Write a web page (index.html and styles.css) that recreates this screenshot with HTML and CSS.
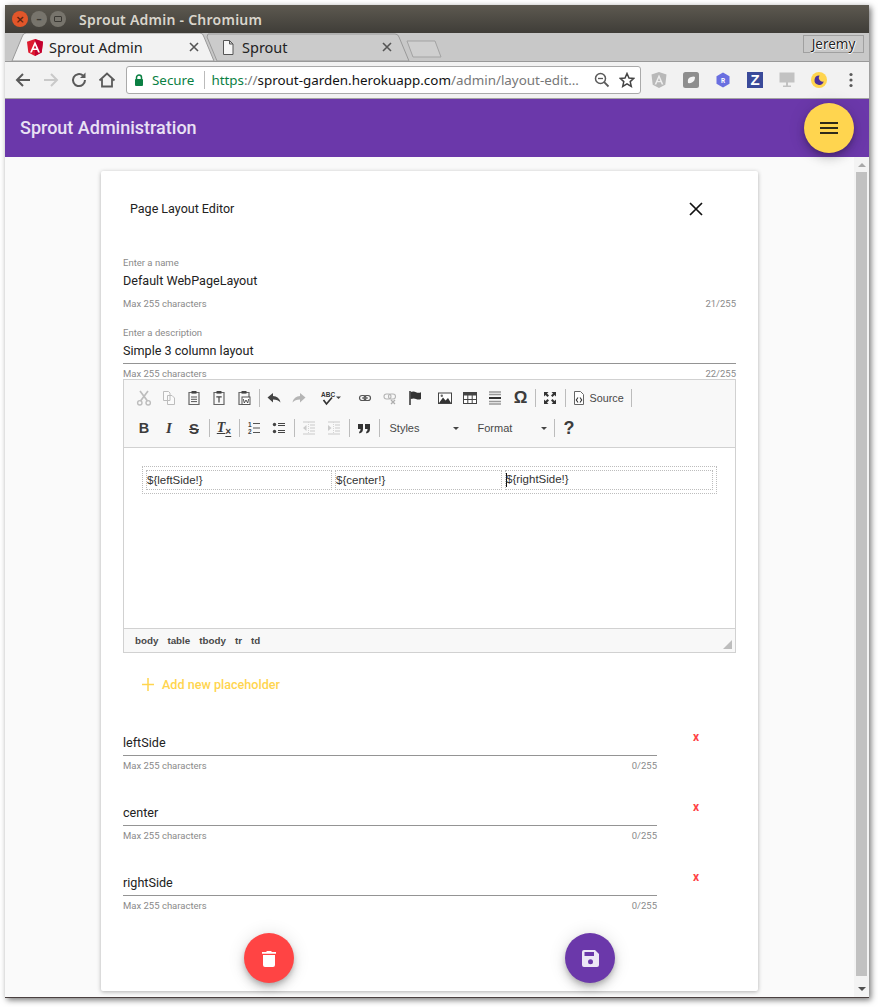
FILE: index.html
```html
<!DOCTYPE html>
<html>
<head>
  <title>Sprout Admin</title>
  <link rel="stylesheet" href="styles.css">
</head>
<body>
  <div class="window">

    <!-- Title bar -->
    <div class="titlebar">
      <span class="winbtn winbtn-close">×</span>
      <span class="winbtn">–</span>
      <span class="winbtn winbtn-max"><i></i></span>
      <span class="wintitle">Sprout Admin - Chromium</span>
    </div>

    <!-- Tabs -->
    <div class="tabstrip">
      <svg class="tabshapes" width="864" height="29" viewBox="0 0 864 29">
        <path d="M203 1 H390 Q393 1 394 4 L404 28 H212 L202 4 Z" fill="#cbcbcb" stroke="#999"/>
        <path d="M402 8 H430 L436 24 H408 Z" fill="#cfcfcf" stroke="#a3a3a3"/>
        <path d="M7 28 L17 4 Q18 0 21 0 H195 Q198 0 199 4 L209 28 Z" fill="#f2f2f2" stroke="#999"/>
      </svg>
      <div class="tab tab-active">
        <svg class="favicon" width="16" height="17" viewBox="0 0 16 17">
          <path d="M8 0 L16 2.8 L14.7 13.4 L8 17 L1.3 13.4 L0 2.8 Z" fill="#dd1b30"/>
          <path d="M8 0 L16 2.8 L14.7 13.4 L8 17 Z" fill="#c3002f"/>
          <path d="M8 2.2 L3 13.4 H4.9 L5.9 10.9 H10.1 L11.1 13.4 H13 Z M8 6.2 L9.4 9.4 H6.6 Z" fill="#fff"/>
        </svg>
        <span class="tab-title">Sprout Admin</span>
        <svg class="tab-x" width="10" height="10" viewBox="0 0 10 10"><path d="M1 1 L9 9 M9 1 L1 9" stroke="#555" stroke-width="1.6"/></svg>
      </div>
      <div class="tab tab-other">
        <svg class="favicon" width="12" height="15" viewBox="0 0 12 15">
          <path d="M1.5 .5 H7.5 L11 4 V14.5 H1.5 Z M7.5 .5 V4 H11" fill="#f5f5f5" stroke="#555"/>
        </svg>
        <span class="tab-title">Sprout</span>
        <svg class="tab-x" width="10" height="10" viewBox="0 0 10 10"><path d="M1 1 L9 9 M9 1 L1 9" stroke="#555" stroke-width="1.6"/></svg>
      </div>
      <span class="profile">Jeremy</span>
    </div>

    <!-- Browser toolbar -->
    <div class="browserbar">
      <svg class="navicon" width="18" height="18" viewBox="0 0 18 18"><path d="M16 9 H3 M9 3 L3 9 L9 15" fill="none" stroke="#5a5a5a" stroke-width="2"/></svg>
      <svg class="navicon" width="18" height="18" viewBox="0 0 18 18"><path d="M2 9 H15 M9 3 L15 9 L9 15" fill="none" stroke="#c9c9c9" stroke-width="2"/></svg>
      <svg class="navicon" width="18" height="18" viewBox="0 0 18 18"><path d="M15 9 A6 6 0 1 1 13 4.6" fill="none" stroke="#5a5a5a" stroke-width="2"/><path d="M15.5 1.5 V7 H10 Z" fill="#5a5a5a"/></svg>
      <svg class="navicon" width="18" height="18" viewBox="0 0 18 18"><path d="M1.5 9.5 L9 2.5 L16.5 9.5 M4 8 V15.5 H14 V8" fill="none" stroke="#5a5a5a" stroke-width="1.8"/></svg>
      <div class="omnibox">
        <svg width="10" height="13" viewBox="0 0 10 13"><path d="M2.5 6 V3.5 A2.5 2.5 0 0 1 7.5 3.5 V6" fill="none" stroke="#0b8043" stroke-width="1.5"/><rect x="1" y="5" width="8" height="7" rx="1" fill="#0b8043"/></svg>
        <span class="secure">Secure</span>
        <span class="omni-sep"></span>
        <span class="url"><span class="url-scheme">https</span><span class="url-path">://</span>sprout-garden.herokuapp.com<span class="url-path">/admin/layout-edit…</span></span>
        <svg class="omni-zoom" width="16" height="16" viewBox="0 0 16 16"><circle cx="6.5" cy="6.5" r="5" fill="none" stroke="#5a5a5a" stroke-width="1.5"/><path d="M10.2 10.2 L14.5 14.5" stroke="#5a5a5a" stroke-width="1.8"/><path d="M4 6.5 H9" stroke="#5a5a5a" stroke-width="1.3"/></svg>
        <svg class="omni-star" width="16" height="16" viewBox="0 0 16 16"><path d="M8 1.5 L10 6 L14.8 6.4 L11.2 9.6 L12.3 14.4 L8 11.9 L3.7 14.4 L4.8 9.6 L1.2 6.4 L6 6 Z" fill="none" stroke="#444" stroke-width="1.5"/></svg>
      </div>
      <div class="extensions">
        <svg width="16" height="16" viewBox="0 0 16 16"><path d="M8 0 L15.5 2.6 L14.3 12.8 L8 16 L1.7 12.8 L.5 2.6 Z" fill="#b9b9b9"/><path d="M8 2.5 L3.6 12.5 H5.3 L6.2 10.2 H9.8 L10.7 12.5 H12.4 Z M8 6 L9.2 8.9 H6.8 Z" fill="#eee"/></svg>
        <svg width="16" height="16" viewBox="0 0 16 16"><rect width="16" height="16" rx="2.5" fill="#8e8e8e"/><path d="M5 11 Q4 6 8 5 Q11 4 12 5 Q12 9 9 10.5 Q7 11.5 5 11 Z" fill="#f4f4f4"/></svg>
        <svg width="16" height="16" viewBox="0 0 16 16"><path d="M8 .5 L14.5 4.2 V11.8 L8 15.5 L1.5 11.8 V4.2 Z" fill="#6a6fe0"/><text x="8" y="10.6" class="ext-r">R</text></svg>
        <span class="ext-z">Z</span>
        <svg width="16" height="16" viewBox="0 0 16 16"><path d="M.5 .5 H15.5 V10.5 H.5 Z M7 10.5 H9 V13.5 H12 V15 H4 V13.5 H7 Z" fill="#c2c2c2"/></svg>
        <svg width="16" height="16" viewBox="0 0 16 16"><circle cx="8" cy="8" r="8" fill="#ffd54f"/><path d="M8.5 3.5 A4.7 4.7 0 1 0 12.7 9.6 A4 4 0 0 1 8.5 3.5 Z" fill="#4a2f9c"/></svg>
        <svg width="16" height="16" viewBox="0 0 16 16"><circle cx="8" cy="2.5" r="1.6" fill="#5a5a5a"/><circle cx="8" cy="8" r="1.6" fill="#5a5a5a"/><circle cx="8" cy="13.5" r="1.6" fill="#5a5a5a"/></svg>
      </div>
    </div>

    <!-- App header -->
    <header class="appbar">
      <span class="appbar-title">Sprout Administration</span>
      <button class="fab fab-menu">
        <svg width="18" height="12" viewBox="0 0 18 12"><path d="M0 1 H18 M0 6 H18 M0 11 H18" stroke="#2f2a1a" stroke-width="2"/></svg>
      </button>
    </header>

    <div class="viewport">
      <main class="page">
        <section class="card">

          <div class="card-head">
            <span class="card-title">Page Layout Editor</span>
            <svg class="card-close" width="14" height="14" viewBox="0 0 14 14"><path d="M1 1 L13 13 M13 1 L1 13" stroke="#111" stroke-width="1.7"/></svg>
          </div>

          <div class="field field-bare">
            <div class="field-label">Enter a name</div>
            <div class="field-value">Default WebPageLayout</div>
            <div class="field-hint"><span>Max 255 characters</span><span>21/255</span></div>
          </div>

          <div class="field field-last">
            <div class="field-label">Enter a description</div>
            <div class="field-value">Simple 3 column layout</div>
            <div class="field-hint"><span>Max 255 characters</span><span>22/255</span></div>
          </div>

          <!-- Rich text editor -->
          <div class="editor">
            <div class="editor-tools">
              <div class="tool-row">
                <span class="tool off"><svg width="16" height="16" viewBox="0 0 16 16"><path d="M4 1 L11.5 11 M12 1 L4.5 11" stroke="#777" stroke-width="1.7"/><circle cx="3.8" cy="12.8" r="2.2" fill="none" stroke="#777" stroke-width="1.4"/><circle cx="12.2" cy="12.8" r="2.2" fill="none" stroke="#777" stroke-width="1.4"/></svg></span>
                <span class="tool off"><svg width="16" height="16" viewBox="0 0 16 16"><path d="M2.5 1.5 H7.5 L9 3 V10.5 H2.5 Z M6.5 5.5 H11 L13.5 8 V14.5 H6.5 Z" fill="#fff" stroke="#777"/></svg></span>
                <span class="tool"><svg width="16" height="16" viewBox="0 0 16 16"><path d="M3 2.5 H13 V14.5 H3 Z" fill="none" stroke="#666" stroke-width="1.2"/><rect x="5.5" y="1" width="5" height="2.6" fill="#444"/><path d="M5 7 H11 M5 9.3 H11 M5 11.6 H11" stroke="#555"/></svg></span>
                <span class="tool"><svg width="16" height="16" viewBox="0 0 16 16"><path d="M3 2.5 H13 V14.5 H3 Z" fill="none" stroke="#666" stroke-width="1.2"/><rect x="5.5" y="1" width="5" height="2.6" fill="#444"/><path d="M5.3 6.8 H10.7 M8 6.8 V12.5" stroke="#444" stroke-width="1.2"/></svg></span>
                <span class="tool"><svg width="16" height="16" viewBox="0 0 16 16"><path d="M3 2.5 H13 V14.5 H3 Z" fill="none" stroke="#666" stroke-width="1.2"/><rect x="5.5" y="1" width="5" height="2.6" fill="#444"/><rect x="6" y="7" width="8" height="7.5" fill="#fff" stroke="#555"/><path d="M7.3 9 L8.3 13 L10 10 L11.7 13 L12.7 9" fill="none" stroke="#444" stroke-width=".9"/></svg></span>
                <span class="tool-sep"></span>
                <span class="tool"><svg width="16" height="16" viewBox="0 0 16 16"><path d="M1.5 7.5 L7 3 V6 Q13 6 14.5 12.5 Q12 9.5 7 9.5 V12.5 Z" fill="#444"/></svg></span>
                <span class="tool off"><svg width="16" height="16" viewBox="0 0 16 16"><path d="M14.5 7.5 L9 3 V6 Q3 6 1.5 12.5 Q4 9.5 9 9.5 V12.5 Z" fill="#666"/></svg></span>
                <span class="tool tool-spell"><svg width="24" height="16" viewBox="0 0 24 16"><text x="1" y="7" class="spell-text">ABC</text><path d="M3.5 10 L6.5 14 L12 7.5" fill="none" stroke="#333" stroke-width="1.7"/><path d="M16 6.5 H21 L18.5 9 Z" fill="#444"/></svg></span>
                <span class="tool"><svg width="16" height="16" viewBox="0 0 16 16"><rect x="2.5" y="5.5" width="6.5" height="5" rx="2.5" fill="none" stroke="#555" stroke-width="1.2"/><rect x="7" y="5.5" width="6.5" height="5" rx="2.5" fill="none" stroke="#555" stroke-width="1.2"/><path d="M5 8 H11" stroke="#555"/></svg></span>
                <span class="tool off"><svg width="16" height="16" viewBox="0 0 16 16"><rect x="2" y="4" width="7" height="5" rx="2.5" fill="none" stroke="#666" stroke-width="1.1"/><rect x="6.5" y="4" width="7" height="5" rx="2.5" fill="none" stroke="#666" stroke-width="1.1"/><path d="M9 10 L13 14 M13 10 L9 14" stroke="#555" stroke-width="1.3"/></svg></span>
                <span class="tool"><svg width="16" height="16" viewBox="0 0 16 16"><path d="M3 1 V15" stroke="#333" stroke-width="1.5"/><path d="M3.5 2 Q7 1 9 2.2 Q11.5 3.4 14 2.2 V9 Q11.5 10.2 9 9 Q7 8 3.5 9 Z" fill="#333"/></svg></span>
                <span class="tool-gap"></span>
                <span class="tool"><svg width="16" height="16" viewBox="0 0 16 16"><rect x="1.5" y="3" width="13" height="10.5" fill="#fff" stroke="#444"/><path d="M2 13 L6 7.5 L8.5 10.5 L11 8 L14 13 Z" fill="#333"/><circle cx="4.8" cy="5.8" r="1.2" fill="#666"/></svg></span>
                <span class="tool"><svg width="16" height="16" viewBox="0 0 16 16"><rect x="1.5" y="2.5" width="13" height="11" fill="#fff" stroke="#444"/><rect x="1.5" y="2.5" width="13" height="3" fill="#444"/><path d="M1.5 9.5 H14.5 M5.8 5 V13.5 M10.2 5 V13.5" stroke="#444"/></svg></span>
                <span class="tool"><svg width="16" height="16" viewBox="0 0 16 16"><path d="M2 2 H14 M2 4.5 H14 M2 11.5 H14 M2 14 H14" stroke="#999" stroke-width="1.5"/><path d="M2 8 H14" stroke="#333" stroke-width="2"/></svg></span>
                <span class="tool tool-glyph tool-omega">Ω</span>
                <span class="tool-sep"></span>
                <span class="tool"><svg width="16" height="16" viewBox="0 0 16 16"><path d="M2 2 H6.5 L5 3.5 L7 5.5 L5.5 7 L3.5 5 L2 6.5 Z M14 2 V6.5 L12.5 5 L10.5 7 L9 5.5 L11 3.5 L9.5 2 Z M2 14 V9.5 L3.5 11 L5.5 9 L7 10.5 L5 12.5 L6.5 14 Z M14 14 H9.5 L11 12.5 L9 10.5 L10.5 9 L12.5 11 L14 9.5 Z" fill="#333"/></svg></span>
                <span class="tool-sep"></span>
                <span class="tool tool-source"><svg width="12" height="14" viewBox="0 0 12 14"><path d="M1.5 .5 H7.5 L10.5 3.5 V13.5 H1.5 Z" fill="#fff" stroke="#666"/><path d="M5 6.5 L3.3 9 L5 11.5 M7 6.5 L8.7 9 L7 11.5" fill="none" stroke="#333" stroke-width="1.1"/></svg>Source</span>
                <span class="tool-sep"></span>
              </div>
              <div class="tool-row">
                <span class="tool tool-glyph tool-bold">B</span>
                <span class="tool tool-glyph tool-italic">I</span>
                <span class="tool tool-glyph tool-strike">S</span>
                <span class="tool-sep"></span>
                <span class="tool tool-glyph tool-clear">T<small>×</small></span>
                <span class="tool-sep"></span>
                <span class="tool"><svg width="16" height="16" viewBox="0 0 16 16"><path d="M7 3.5 H14 M7 8 H14 M7 12.5 H14" stroke="#555" stroke-width="1.2"/><text x="2" y="6.5" class="list-num">1</text><text x="2" y="14" class="list-num">2</text></svg></span>
                <span class="tool"><svg width="16" height="16" viewBox="0 0 16 16"><circle cx="3.5" cy="4.5" r="1.7" fill="#444"/><circle cx="3.5" cy="11.5" r="1.7" fill="#444"/><path d="M7 3.5 H14 M7 5.5 H14 M7 10.5 H14 M7 12.5 H14" stroke="#444"/></svg></span>
                <span class="tool-sep"></span>
                <span class="tool off faint"><svg width="16" height="16" viewBox="0 0 16 16"><path d="M2 2 H14 M9 5 H14 M9 8 H14 M9 11 H14 M2 14 H14" stroke="#666"/><path d="M7.5 2 V14 " stroke="#888" stroke-dasharray="1 1"/><path d="M5.5 5 L2 8 L5.5 11 Z" fill="#666"/></svg></span>
                <span class="tool off faint"><svg width="16" height="16" viewBox="0 0 16 16"><path d="M2 2 H14 M9 5 H14 M9 8 H14 M9 11 H14 M2 14 H14" stroke="#666"/><path d="M7.5 2 V14 " stroke="#888" stroke-dasharray="1 1"/><path d="M2 5 L5.5 8 L2 11 Z" fill="#666"/></svg></span>
                <span class="tool-sep"></span>
                <span class="tool"><svg width="16" height="16" viewBox="0 0 16 16"><path d="M2 4 H7 V9 Q7 12.5 3.5 13.5 L3 12 Q4.5 11.3 4.6 9 H2 Z M9 4 H14 V9 Q14 12.5 10.5 13.5 L10 12 Q11.5 11.3 11.6 9 H9 Z" fill="#333"/></svg></span>
                <span class="tool-sep"></span>
                <span class="combo combo-styles">Styles<i class="caret"></i></span>
                <span class="combo combo-format">Format<i class="caret"></i></span>
                <span class="tool-sep"></span>
                <span class="tool tool-glyph tool-help">?</span>
              </div>
            </div>

            <div class="editor-body">
              <table class="layout-table">
                <tr>
                  <td class="col-left">${leftSide!}</td>
                  <td class="col-center">${center!}</td>
                  <td class="col-right"><span class="caret-mark"></span>${rightSide!}</td>
                </tr>
              </table>
            </div>

            <div class="editor-path">
              <span>body</span><span>table</span><span>tbody</span><span>tr</span><span>td</span>
              <svg class="resizer" width="9" height="9" viewBox="0 0 9 9"><path d="M9 0 V9 H0 Z" fill="#bdbdbd"/></svg>
            </div>
          </div>

          <button class="add-btn">
            <svg width="12" height="13" viewBox="0 0 12 13"><path d="M6 0 V13 M0 6.5 H12" stroke="#ffd54f" stroke-width="1.5"/></svg>
            Add new placeholder
          </button>

          <div class="ph-row">
            <div class="field ph-field">
              <div class="field-value">leftSide</div>
              <div class="field-hint"><span>Max 255 characters</span><span>0/255</span></div>
            </div>
            <span class="ph-remove">x</span>
          </div>
          <div class="ph-row">
            <div class="field ph-field">
              <div class="field-value">center</div>
              <div class="field-hint"><span>Max 255 characters</span><span>0/255</span></div>
            </div>
            <span class="ph-remove">x</span>
          </div>
          <div class="ph-row">
            <div class="field ph-field">
              <div class="field-value">rightSide</div>
              <div class="field-hint"><span>Max 255 characters</span><span>0/255</span></div>
            </div>
            <span class="ph-remove">x</span>
          </div>

          <div class="card-actions">
            <button class="fab fab-delete">
              <svg width="14" height="17" viewBox="0 0 14 17"><path d="M1 5 H13 V15 Q13 17 11 17 H3 Q1 17 1 15 Z M0 2 H4 L5 1 H9 L10 2 H14 V3.7 H0 Z" fill="#fff"/></svg>
            </button>
            <button class="fab fab-save">
              <svg width="17" height="17" viewBox="0 0 17 17"><path d="M2 0 H13 L17 4 V15 Q17 17 15 17 H2 Q0 17 0 15 V2 Q0 0 2 0 Z M2.5 2 V6 H12 V2 Z" fill="#ede7f6" fill-rule="evenodd"/><circle cx="8.5" cy="11.8" r="2.5" fill="#6b38aa"/></svg>
            </button>
          </div>
        </section>
      </main>

      <div class="scrollbar">
        <i class="scroll-up"></i>
        <div class="scroll-thumb"></div>
        <i class="scroll-down"></i>
      </div>
    </div>
  </div>
</body>
</html>
```

FILE: styles.css
```css
html, body {
  margin: 0;
  height: 100%;
  background: #fff;
  overflow: hidden;
}

body {
  padding: 5px 0 0 5px;
  box-sizing: border-box;
  font-family: Roboto, sans-serif;
}

button {
  font-family: inherit;
  border: none;
  padding: 0;
  background: none;
}

.window {
  width: 864px;
  height: 993px;
  display: flex;
  flex-direction: column;
  border-bottom: 1px solid #4a4040;
  box-sizing: border-box;
  box-shadow: 2px 2px 6px rgba(0, 0, 0, .55);
}

/* Title bar */
.titlebar {
  height: 28px;
  flex: none;
  display: flex;
  align-items: center;
  padding-left: 7px;
  gap: 3px;
  background: linear-gradient(#5d5950, #3f3d38);
}

.winbtn {
  width: 16px;
  height: 16px;
  border-radius: 50%;
  display: flex;
  align-items: center;
  justify-content: center;
  background: #77746c;
  color: #3a3833;
  font: bold 11px "DejaVu Sans", sans-serif;
}

.winbtn-close {
  background: #e2562a;
  color: #5c2410;
}

.winbtn-max i {
  width: 6px;
  height: 4px;
  border: 1px solid #3a3833;
  border-radius: 1px;
}

.wintitle {
  margin-left: 10px;
  color: #d9d5cc;
  font: 600 14px "Noto Sans", sans-serif;
  letter-spacing: .25px;
}

/* Tabs */
.tabstrip {
  height: 29px;
  flex: none;
  display: flex;
  position: relative;
  background: #c8c8c8;
  box-sizing: border-box;
  border-bottom: 1px solid #999;
}

.tabshapes {
  position: absolute;
  left: 0;
  top: 0;
}

.tab {
  position: relative;
  display: flex;
  align-items: center;
  font: 14.5px "Noto Sans", sans-serif;
  color: #222;
  height: 28px;
}

.tab-active {
  width: 172px;
  margin-left: 22px;
}

.tab-other {
  width: 170px;
  margin-left: 23px;
}

.favicon {
  flex: none;
}

.tab-active .tab-title {
  margin-left: 6px;
}

.tab-other .tab-title {
  margin-left: 8px;
}

.tab-x {
  margin-left: auto;
}

.profile {
  position: absolute;
  right: 5px;
  top: 2px;
  width: 61px;
  height: 18px;
  box-sizing: border-box;
  border: 1px solid #a0a0a0;
  text-align: center;
  font: 13.5px/16px "Noto Sans", sans-serif;
  color: #222;
  text-shadow: 0 0 1px #fff, 1px 0 0 #fff, 0 1px 0 #fff;
}

/* Browser toolbar */
.browserbar {
  height: 37px;
  flex: none;
  display: flex;
  align-items: center;
  padding-left: 9px;
  box-sizing: border-box;
  background: #f2f2f2;
  border-bottom: 1px solid #a3a3a3;
}

.navicon {
  flex: none;
  margin-right: 10px;
}

.omnibox {
  width: 515px;
  height: 28px;
  flex: none;
  display: flex;
  align-items: center;
  padding: 0 5px 0 7px;
  box-sizing: border-box;
  background: #fff;
  border: 1px solid #aaa;
  border-radius: 3px;
  font: 13.4px "Noto Sans", sans-serif;
  white-space: nowrap;
}

.secure {
  margin-left: 8px;
  color: #0b8043;
}

.omni-sep {
  width: 1px;
  height: 18px;
  margin: 0 6px 0 10px;
  background: #bbb;
}

.url {
  color: #111;
}

.url-scheme {
  color: #0b8043;
}

.url-path {
  color: #777;
}

.omni-zoom {
  margin-left: auto;
}

.omni-star {
  margin-left: 9px;
}

.extensions {
  display: flex;
  align-items: center;
  gap: 16px;
  margin-left: 10px;
}

.ext-r {
  font: bold 6.5px Roboto, sans-serif;
  fill: #fff;
  text-anchor: middle;
}

.ext-z {
  width: 16px;
  height: 16px;
  background: #3a4a9a;
  color: #fff;
  font: bold 15px/16px "Liberation Sans", sans-serif;
  text-align: center;
}

/* App header */
.appbar {
  height: 58px;
  flex: none;
  position: relative;
  display: flex;
  align-items: center;
  padding: 0 0 2px 15px;
  box-sizing: border-box;
  background: #6b38aa;
}

.appbar-title {
  color: #e9e1f4;
  font-size: 18px;
  font-weight: 500;
}

.fab {
  width: 50px;
  height: 50px;
  border-radius: 50%;
  display: flex;
  align-items: center;
  justify-content: center;
  box-shadow: 0 3px 5px -1px rgba(0, 0, 0, .2), 0 6px 10px 0 rgba(0, 0, 0, .14), 0 1px 18px 0 rgba(0, 0, 0, .12);
}

.fab-menu {
  position: absolute;
  right: 15px;
  top: 4px;
  background: #ffd54f;
}

.fab-delete {
  background: #ff4444;
}

.fab-save {
  background: #6b38aa;
}

/* Page */
.viewport {
  flex: 1;
  display: flex;
  min-height: 0;
  background: #fafafa;
}

.page {
  flex: 1;
  padding: 14px 0 0 96px;
}

.card {
  width: 657px;
  height: 820px;
  padding: 0 22px;
  box-sizing: border-box;
  background: #fff;
  border-radius: 2px;
  box-shadow: 0 1px 4px rgba(0, 0, 0, .3);
}

.card-head {
  display: flex;
  align-items: center;
  justify-content: space-between;
  height: 24px;
  padding: 26px 33px 36px 7px;
}

.card-title {
  font-size: 12.5px;
  line-height: 22px;
  color: #222;
}

/* Form fields */
.field {
  margin-bottom: 17px;
}

.field-last {
  margin-bottom: -1px;
}

.field-label {
  height: 12px;
  margin-bottom: 3px;
  font-size: 9.5px;
  line-height: 12px;
  color: #8a8a8a;
}

.field-value {
  height: 18px;
  padding-bottom: 3px;
  border-bottom: 1px solid #949494;
  font-size: 12.6px;
  line-height: 18px;
  color: #222;
}

.field-bare .field-value {
  border-bottom-color: transparent;
}

.field-hint {
  display: flex;
  justify-content: space-between;
  margin-top: 4px;
  font-size: 9.5px;
  line-height: 12px;
  color: #8a8a8a;
}

/* Editor */
.editor {
  height: 274px;
  box-sizing: border-box;
  border: 1px solid #d1d1d1;
  display: flex;
  flex-direction: column;
  font-family: "Liberation Sans", sans-serif;
}

.editor-tools {
  height: 68px;
  flex: none;
  box-sizing: border-box;
  padding: 6px 0 0 7.5px;
  background: #f8f8f8;
  border-bottom: 1px solid #d1d1d1;
}

.tool-row {
  display: flex;
  align-items: center;
  height: 24px;
  margin-bottom: 6px;
}

.tool {
  width: 25px;
  height: 24px;
  flex: none;
  display: flex;
  align-items: center;
  justify-content: center;
  color: #444;
}

.off {
  opacity: .45;
}

.faint {
  opacity: .3;
}

.tool-sep {
  width: 1px;
  height: 18px;
  flex: none;
  margin: 0 2px;
  background: #bcbcbc;
}

.tool-gap {
  width: 5px;
  flex: none;
}

.tool-spell {
  width: 41px;
  justify-content: flex-start;
  padding-left: 8px;
  box-sizing: border-box;
}

.spell-text {
  font: bold 6.5px "Liberation Sans", sans-serif;
  fill: #333;
}

.list-num {
  font: bold 6.5px "Liberation Sans", sans-serif;
  fill: #444;
}

.tool-source {
  width: auto;
  padding: 0 5px 0 5px;
  gap: 5px;
  font-size: 10.8px;
  color: #484848;
}

.tool-glyph {
  font-size: 15px;
  font-weight: bold;
  color: #3c3c3c;
}

.tool-omega {
  font-size: 17px;
  padding-left: 1px;
  box-sizing: border-box;
}

.tool-bold {
  font-size: 14.5px;
}

.tool-italic {
  font: italic bold 15px "Liberation Serif", serif;
}

.tool-strike {
  text-decoration: line-through;
}

.tool-clear {
  font: italic bold 14px "Liberation Serif", serif;
  text-decoration: underline;
}

.tool-clear small {
  font: bold 10px "Liberation Sans", sans-serif;
  margin-top: 6px;
}

.tool-help {
  font-size: 18px;
}

.combo {
  display: flex;
  align-items: center;
  justify-content: space-between;
  flex: none;
  box-sizing: border-box;
  height: 24px;
  font-size: 11px;
  color: #484848;
}

.combo-styles {
  width: 87px;
  padding: 0 10px 0 8px;
}

.combo-format {
  width: 83px;
  padding: 0 5px 0 9px;
}

.caret {
  width: 0;
  height: 0;
  border: 3px solid transparent;
  border-top-color: #444;
  border-bottom: none;
}

.editor-body {
  flex: 1;
  padding: 18px;
  background: #fff;
}

.layout-table {
  table-layout: fixed;
  width: 575px;
  border-spacing: 3px;
  border: 1px dotted #bdbdbd;
  font-size: 11.5px;
  color: #333;
}

.layout-table td {
  height: 20px;
  padding: 0;
  box-sizing: border-box;
  border: 1px dotted #bdbdbd;
  white-space: nowrap;
}

.col-left {
  width: 186px;
}

.col-center {
  width: 167px;
}

.col-right {
  width: 208px;
}

.caret-mark {
  display: inline-block;
  width: 1px;
  height: 14px;
  margin-right: -1px;
  background: #111;
  vertical-align: middle;
}

.editor-path {
  height: 24px;
  flex: none;
  position: relative;
  display: flex;
  align-items: center;
  gap: 9px;
  padding-left: 11px;
  box-sizing: border-box;
  background: #f8f8f8;
  border-top: 1px solid #d1d1d1;
  font-size: 9.8px;
  font-weight: bold;
  color: #484848;
}

.resizer {
  position: absolute;
  right: 3px;
  bottom: 3px;
}

.add-btn {
  height: 36px;
  margin: 13px 0 17px 19px;
  display: flex;
  align-items: center;
  gap: 8px;
  color: #ffd54f;
  font-size: 12.6px;
  font-weight: 500;
}

/* Placeholder rows */
.ph-row {
  display: flex;
  margin-bottom: 17px;
}

.ph-field {
  width: 534px;
  padding-top: 15px;
  margin-bottom: 0;
}

.ph-remove {
  margin-left: 36px;
  line-height: 12px;
  padding-top: 12px;
  font-size: 12px;
  font-weight: bold;
  color: #ff4444;
}

.card-actions {
  display: flex;
  gap: 271px;
  padding-left: 121px;
  margin-top: 21px;
}

/* Scrollbar */
.scrollbar {
  width: 15px;
  flex: none;
  display: flex;
  flex-direction: column;
  align-items: center;
  background: #f3f3f3;
}

.scroll-up,
.scroll-down {
  width: 0;
  height: 0;
  flex: none;
  border: 4px solid transparent;
}

.scroll-up {
  margin: 6px 0 5px;
  border-bottom-color: #a8a8a8;
  border-top: none;
}

.scroll-down {
  margin: 11px 0 0;
  border-top-color: #505050;
  border-bottom: none;
}

.scroll-thumb {
  width: 11px;
  height: 804px;
  flex: none;
  background: #c1c1c1;
}
```
